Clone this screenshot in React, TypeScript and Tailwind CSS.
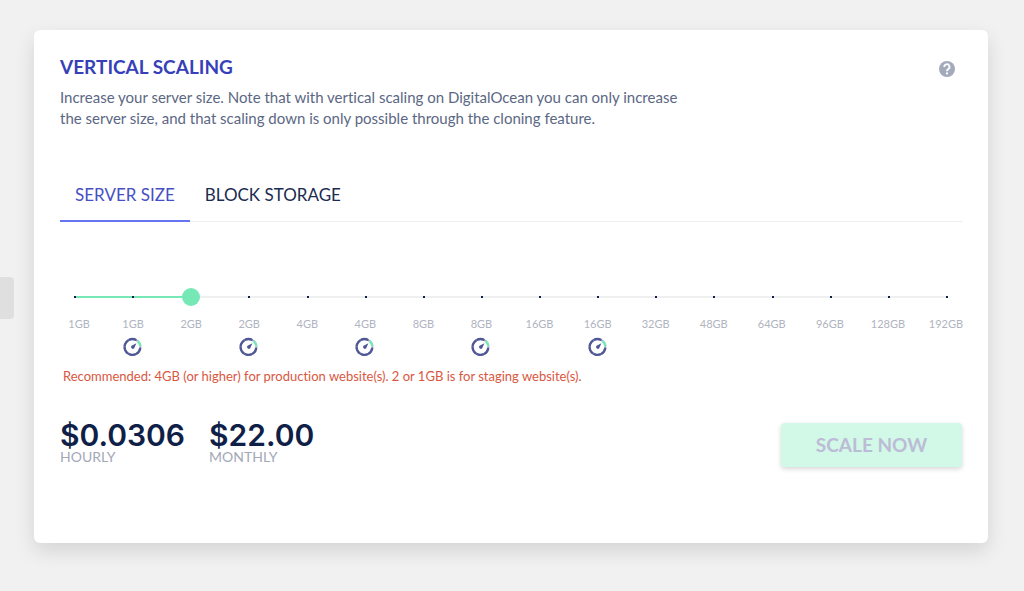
import { useState } from 'react'
import { clsx } from 'clsx'

interface ServerSize {
  id: number
  label: string
  optimized: boolean
}

const SIZES: ServerSize[] = [
  { id: 0, label: '1GB', optimized: false },
  { id: 1, label: '1GB', optimized: true },
  { id: 2, label: '2GB', optimized: false },
  { id: 3, label: '2GB', optimized: true },
  { id: 4, label: '4GB', optimized: false },
  { id: 5, label: '4GB', optimized: true },
  { id: 6, label: '8GB', optimized: false },
  { id: 7, label: '8GB', optimized: true },
  { id: 8, label: '16GB', optimized: false },
  { id: 9, label: '16GB', optimized: true },
  { id: 10, label: '32GB', optimized: false },
  { id: 11, label: '48GB', optimized: false },
  { id: 12, label: '64GB', optimized: false },
  { id: 13, label: '96GB', optimized: false },
  { id: 14, label: '128GB', optimized: false },
  { id: 15, label: '192GB', optimized: false },
]

const TABS = ['SERVER SIZE', 'BLOCK STORAGE']

function GaugeIcon() {
  return (
    <svg width="20" height="20" viewBox="0 0 20 20" fill="none" aria-hidden="true">
      <circle cx="9.5" cy="10" r="7.9" stroke="#8f94bd" strokeWidth="2" />
      <path d="M13.2 3A7.9 7.9 0 1 0 17.3 11" stroke="#4f5796" strokeWidth="2.3" strokeDasharray="7.8 0.3" />
      <path d="M14.4 3.9A7.9 7.9 0 0 1 17.4 9.4" stroke="#fff" strokeWidth="2.6" />
      <path d="M14.6 4A7.9 7.9 0 0 1 17.4 9.2" stroke="#76e8b6" strokeWidth="2.4" />
      <path d="M13.4 6.2L11.2 11.2A1.8 1.8 0 1 1 8.5 8.8Z" fill="#4f5796" />
    </svg>
  )
}

function HelpIcon() {
  return (
    <svg width="16" height="16" viewBox="0 0 16 16" fill="none" aria-hidden="true">
      <circle cx="8" cy="8" r="8" fill="#a3aabb" />
      <path d="M5.3 6A2.6 2.6 0 1 1 9.3 8C8.4 8.6 8 8.9 8 10.2" stroke="#fff" strokeWidth="1.8" />
      <circle cx="8" cy="12.4" r="1.1" fill="#fff" />
    </svg>
  )
}

function SizeSlider({ value, onChange }: { value: number; onChange: (v: number) => void }) {
  const percent = (value / (SIZES.length - 1)) * 100

  return (
    <div className="pr-[7px] pl-[6px]">
      <div className="relative h-[18px]">
        {/* Track, filled part and one dot per size */}
        <div className="absolute inset-x-[9px] top-2 h-[2px] bg-[#efefef]">
          <div className="h-full bg-[#76e8b6]" style={{ width: `${percent}%` }} />
        </div>
        <div className="absolute inset-x-[8px] top-2 flex justify-between">
          {SIZES.map(size => (
            <span key={size.id} className="size-[2px] bg-[#0f1f47]" />
          ))}
        </div>
        <input
          type="range"
          aria-label="Server size"
          min={0}
          max={SIZES.length - 1}
          value={value}
          onChange={e => onChange(Number(e.target.value))}
          className="absolute inset-0 m-0 h-[18px] w-full cursor-pointer appearance-none bg-transparent [&::-webkit-slider-thumb]:size-[18px] [&::-webkit-slider-thumb]:appearance-none [&::-webkit-slider-thumb]:rounded-full [&::-webkit-slider-thumb]:bg-[#76e8b6]"
        />
      </div>
    </div>
  )
}

function Price({ amount, period }: { amount: string; period: string }) {
  return (
    <div>
      <div className="font-['Inter','Lato',sans-serif] text-[30px] leading-[30px] font-semibold text-[#0f1f47]">{amount}</div>
      <div className="text-sm leading-[14px] text-[#a3a8b7]">{period}</div>
    </div>
  )
}

export default function App() {
  const [tab, setTab] = useState(TABS[0])
  const [size, setSize] = useState(2)

  return (
    <div className="flex min-h-screen items-start bg-[#f1f1f1] font-['Lato','Open_Sans',sans-serif] [font-variant-ligatures:none]">
      {/* Drawer handle */}
      <button aria-label="Open menu" className="mt-1 h-[42px] w-[14px] shrink-0 self-center rounded-r bg-[#dfdfdf]" />

      <main className="mt-[30px] mr-9 mb-12 ml-5 min-w-0 flex-1 rounded-md bg-white pt-[25px] pr-[25px] pb-[76px] pl-[26px] shadow-[0_8px_20px_rgba(0,0,0,0.12)]">
        <header className="flex items-start justify-between">
          <div>
            <h1 className="text-[19px] leading-6 font-bold text-[#373fb9]">VERTICAL SCALING</h1>
            <p className="mt-2 max-w-[640px] text-[15px] leading-[21px] text-[#5b6784]">
              Increase your server size. Note that with vertical scaling on DigitalOcean you can only increase the server size, and that scaling down is only possible through the cloning feature.
            </p>
          </div>
          <button aria-label="Help" className="mt-[6px] mr-2">
            <HelpIcon />
          </button>
        </header>

        <div role="tablist" className="mt-[41px] flex border-b border-[#efefef]">
          {TABS.map(name => (
            <button
              key={name}
              role="tab"
              aria-selected={tab === name}
              onClick={() => setTab(name)}
              className={clsx(
                '-mb-px border-b-2 px-[15px] pt-[13px] pb-[13px] text-[17px] leading-6',
                tab === name ? 'border-[#6574f0] text-[#474fc4]' : 'border-transparent text-[#1c2b50]',
              )}
            >
              {name}
            </button>
          ))}
        </div>

        <section className="mt-[66px]">
          <SizeSlider value={size} onChange={setSize} />

          <div className="mt-[10px] -mr-3 -ml-[14px] grid grid-cols-16">
            {SIZES.map(s => (
              <div key={s.id} className="flex flex-col items-center text-[11px] leading-4 text-[#b0b4c0] first:pl-2">
                <span>{s.label}</span>
                {s.optimized && (
                  <span className="mt-[5px]">
                    <GaugeIcon />
                  </span>
                )}
              </div>
            ))}
          </div>

          <p className="mt-[11px] ml-[3px] text-[13px] leading-4 text-[#d9573f]">
            Recommended: 4GB (or higher) for production website(s). 2 or 1GB is for staging website(s).
          </p>
        </section>

        <footer className="mt-9 flex items-start justify-between">
          <div className="flex gap-6">
            <Price amount="$0.0306" period="HOURLY" />
            <Price amount="$22.00" period="MONTHLY" />
          </div>
          <button
            disabled
            className="mt-[3px] mr-px h-11 w-[181px] rounded bg-[#d2f8e7] text-[19px] font-bold text-[#bcbcd6] shadow-[0_2px_5px_rgba(0,0,0,0.16)]"
          >
            SCALE NOW
          </button>
        </footer>
      </main>
    </div>
  )
}
